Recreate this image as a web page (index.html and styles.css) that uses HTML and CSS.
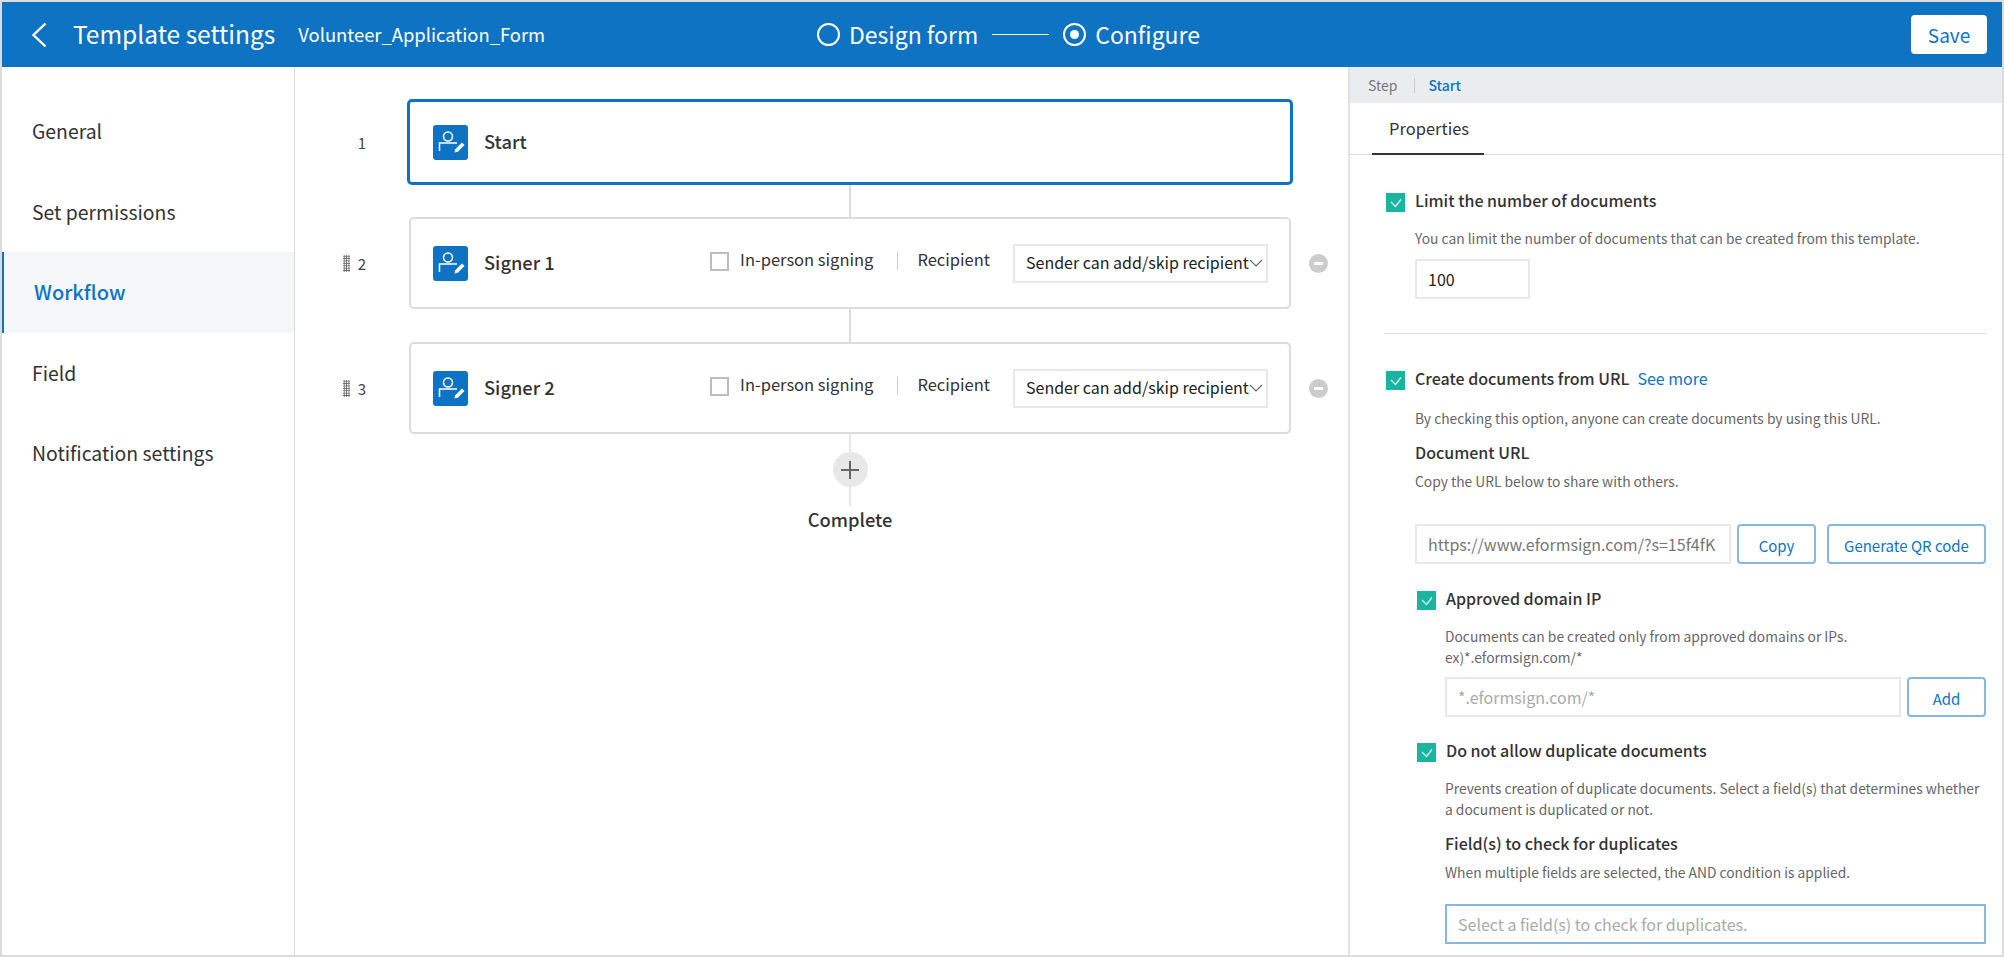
FILE: index.html
```html
<!DOCTYPE html>
<html>
  <head>
    <meta charset="utf-8" />
    <title>Template settings</title>
    <link rel="stylesheet" href="styles.css">
  </head>
  <body>
    <div id="frame">
      <header class="topbar">
        <div class="topbar-left">
          <svg class="back" width="16" height="26" viewBox="0 0 16 26"><path d="M14.5 1.5 2.5 13l12 11.5" fill="none" stroke="#fff" stroke-width="2.4"/></svg>
          <span class="page-title">Template settings</span>
          <span class="form-name">Volunteer_Application_Form</span>
        </div>
        <div class="steps">
          <span class="radio"></span>
          <span class="step-label">Design form</span>
          <span class="step-line"></span>
          <span class="radio radio-on"></span>
          <span class="step-label">Configure</span>
        </div>
        <button class="save" type="button">Save</button>
      </header>

      <div class="content">
        <nav class="sidebar">
          <div class="nav-item">General</div>
          <div class="nav-item">Set permissions</div>
          <div class="nav-item nav-active">Workflow</div>
          <div class="nav-item">Field</div>
          <div class="nav-item">Notification settings</div>
        </nav>

        <main class="flow">
          <div class="flow-row">
            <div class="flow-num"><span>1</span></div>
            <div class="card card-start">
              <svg class="step-icon" width="35" height="35" viewBox="0 0 35 35"><rect width="35" height="35" rx="3" fill="#0f73c4"/><circle cx="15" cy="11.5" r="4.500" fill="none" stroke="#fff" stroke-width="1.500"/><path d="M6.500 26v-8H24" fill="none" stroke="#fff" stroke-width="1.500"/><path d="M21.500 27.500l.8-3.300 6.700-6.700 2.500 2.500-6.700 6.700z" fill="#fff"/></svg>
              <span class="card-title">Start</span>
            </div>
          </div>
          <div class="connector"></div>

          <div class="flow-row">
            <div class="flow-num"><span class="handle"></span><span>2</span></div>
            <div class="card">
              <svg class="step-icon" width="35" height="35" viewBox="0 0 35 35"><rect width="35" height="35" rx="3" fill="#0f73c4"/><circle cx="15" cy="11.5" r="4.500" fill="none" stroke="#fff" stroke-width="1.500"/><path d="M6.500 26v-8H24" fill="none" stroke="#fff" stroke-width="1.500"/><path d="M21.500 27.500l.8-3.300 6.700-6.700 2.500 2.500-6.700 6.700z" fill="#fff"/></svg>
              <span class="card-title">Signer 1</span>
              <div class="card-options">
                <span class="box"></span>
                <span class="opt-label">In-person signing</span>
                <span class="opt-sep"></span>
                <span class="opt-label">Recipient</span>
                <div class="select">
                  <span>Sender can add/skip recipient</span>
                  <svg width="14" height="8" viewBox="0 0 14 8"><path d="M1 1l6 6 6-6" fill="none" stroke="#666" stroke-width="1.100"/></svg>
                </div>
              </div>
            </div>
            <span class="minus"></span>
          </div>
          <div class="connector connector-2"></div>

          <div class="flow-row">
            <div class="flow-num"><span class="handle"></span><span>3</span></div>
            <div class="card">
              <svg class="step-icon" width="35" height="35" viewBox="0 0 35 35"><rect width="35" height="35" rx="3" fill="#0f73c4"/><circle cx="15" cy="11.5" r="4.500" fill="none" stroke="#fff" stroke-width="1.500"/><path d="M6.500 26v-8H24" fill="none" stroke="#fff" stroke-width="1.500"/><path d="M21.500 27.500l.8-3.300 6.700-6.700 2.500 2.500-6.700 6.700z" fill="#fff"/></svg>
              <span class="card-title">Signer 2</span>
              <div class="card-options">
                <span class="box"></span>
                <span class="opt-label">In-person signing</span>
                <span class="opt-sep"></span>
                <span class="opt-label">Recipient</span>
                <div class="select">
                  <span>Sender can add/skip recipient</span>
                  <svg width="14" height="8" viewBox="0 0 14 8"><path d="M1 1l6 6 6-6" fill="none" stroke="#666" stroke-width="1.100"/></svg>
                </div>
              </div>
            </div>
            <span class="minus"></span>
          </div>

          <div class="end-block">
            <div class="end-line">
              <span class="plus">
                <svg width="18" height="18" viewBox="0 0 18 18"><path d="M9 0v18M0 9h18" stroke="#666" stroke-width="2"/></svg>
              </span>
            </div>
            <div class="end-label">Complete</div>
          </div>
        </main>

        <aside class="panel">
          <div class="crumb">
            <span class="crumb-step">Step</span>
            <span class="crumb-sep"></span>
            <span class="crumb-now">Start</span>
          </div>
          <div class="tabs"><span class="tab">Properties</span></div>

          <div class="props">
            <div class="check-row">
              <span class="check"><svg width="12" height="10" viewBox="0 0 12 10"><path d="M1 4l4.500 4.500L11 1.500" fill="none" stroke="#d8f3ee" stroke-width="1.300"/></svg></span>
              <span class="check-label">Limit the number of documents</span>
            </div>
            <div class="indent">
              <p class="hint hint-1">You can limit the number of documents that can be created from this template.</p>
              <div class="input input-num">100</div>
            </div>

            <hr class="rule">

            <div class="check-row">
              <span class="check"><svg width="12" height="10" viewBox="0 0 12 10"><path d="M1 4l4.500 4.500L11 1.500" fill="none" stroke="#d8f3ee" stroke-width="1.300"/></svg></span>
              <span class="check-label">Create documents from URL</span>
              <a class="see-more">See more</a>
            </div>
            <div class="indent">
              <p class="hint hint-2">By checking this option, anyone can create documents by using this URL.</p>
              <h4 class="sub-head head-url">Document URL</h4>
              <p class="hint hint-3">Copy the URL below to share with others.</p>
              <div class="input-row url-row">
                <div class="input input-url">https://www.eformsign.com/?s=15f4fK</div>
                <button class="btn btn-copy" type="button">Copy</button>
                <button class="btn btn-qr" type="button">Generate QR code</button>
              </div>
            </div>

            <div class="nested">
              <div class="check-row row-domain">
                <span class="check"><svg width="12" height="10" viewBox="0 0 12 10"><path d="M1 4l4.500 4.500L11 1.500" fill="none" stroke="#d8f3ee" stroke-width="1.300"/></svg></span>
                <span class="check-label">Approved domain IP</span>
              </div>
              <div class="nested-body">
                <p class="hint hint-4">Documents can be created only from approved domains or IPs.<br>ex)*.eformsign.com/*</p>
                <div class="input-row domain-row">
                  <div class="input input-domain">*.eformsign.com/*</div>
                  <button class="btn btn-add" type="button">Add</button>
                </div>
              </div>

              <div class="check-row row-dup">
                <span class="check"><svg width="12" height="10" viewBox="0 0 12 10"><path d="M1 4l4.500 4.500L11 1.500" fill="none" stroke="#d8f3ee" stroke-width="1.300"/></svg></span>
                <span class="check-label">Do not allow duplicate documents</span>
              </div>
              <div class="nested-body">
                <p class="hint hint-5">Prevents creation of duplicate documents. Select a field(s) that determines whether a document is duplicated or not.</p>
                <h4 class="sub-head head-dup">Field(s) to check for duplicates</h4>
                <p class="hint hint-3">When multiple fields are selected, the AND condition is applied.</p>
                <div class="input input-dup">Select a field(s) to check for duplicates.</div>
              </div>
            </div>
          </div>
        </aside>
      </div>
    </div>
  </body>
</html>
```

FILE: styles.css
```css
/* Template settings page */
* {
  box-sizing: border-box;
}
html, body {
  margin: 0;
  padding: 0;
  overflow: hidden;
}
body {
  font-family: "Noto Sans CJK KR", "Noto Sans", sans-serif;
  color: #333;
  background-color: #fff;
}
#frame {
  width: 2004px;
  height: 957px;
  border: 2px solid #dcdcdc;
  display: flex;
  flex-direction: column;
  overflow: hidden;
}

/* top bar */
.topbar {
  height: 65px;
  flex: none;
  background-color: #0f73c4;
  color: #fff;
  display: flex;
  align-items: center;
  position: relative;
}
.topbar-left {
  display: flex;
  align-items: center;
  padding-left: 29px;
}
.page-title {
  font-size: 24.500px;
  margin-left: 26px;
  margin-top: -2px;
}
.form-name {
  font-size: 18.400px;
  margin-left: 23px;
  margin-top: -2px;
}
.steps {
  position: absolute;
  left: 815px;
  top: 0;
  height: 65px;
  display: flex;
  align-items: center;
  font-size: 23px;
}
.radio {
  width: 23px;
  height: 23px;
  border: 2px solid #fff;
  border-radius: 50%;
  display: block;
  position: relative;
}
.radio-on::after {
  content: "";
  position: absolute;
  left: 5px;
  top: 5px;
  width: 9px;
  height: 9px;
  border-radius: 50%;
  background-color: #fff;
}
.step-label {
  margin-left: 9px;
  margin-top: -2px;
}
.step-line {
  width: 57px;
  height: 1px;
  background-color: #fff;
  margin: 0 14px 0 14px;
}
.save {
  margin-left: auto;
  margin-right: 15px;
  width: 76px;
  height: 39px;
  border: none;
  border-radius: 4px;
  background-color: #fff;
  color: #0f73c4;
  font-family: inherit;
  font-size: 19px;
  padding: 0;
}

.content {
  flex: 1;
  display: flex;
  min-height: 0;
}

/* left nav */
.sidebar {
  width: 293px;
  flex: none;
  border-right: 1px solid #dcdcdc;
  padding-top: 24px;
}
.nav-item {
  height: 80.500px;
  display: flex;
  align-items: center;
  padding-left: 30px;
  padding-bottom: 1px;
  font-size: 19.400px;
}
.nav-active {
  background-color: #f5f6f8;
  border-left: 2px solid #0f73c4;
  color: #0f73c4;
  font-weight: 500;
  font-size: 20px;
}

/* workflow */
.flow {
  flex: 1;
  padding-top: 32px;
  min-width: 0;
}
.flow-row {
  display: flex;
  align-items: center;
}
.flow-num {
  width: 112px;
  flex: none;
  display: flex;
  justify-content: flex-end;
  align-items: center;
  gap: 8px;
  padding-right: 41px;
  font-size: 15px;
  color: #444;
}
.handle {
  width: 7px;
  height: 17px;
  background-image: radial-gradient(#666 0.9px, transparent 1.1px);
  background-size: 2.400px 2.400px;
}
.card {
  width: 882px;
  height: 92px;
  margin-left: 2px;
  border: 2px solid #dcdcdc;
  border-radius: 5px;
  display: flex;
  align-items: center;
  padding-left: 22px;
  background-color: #fff;
}
.card-start {
  width: 886px;
  height: 86px;
  margin-left: 0;
  border: 3px solid #0f73c4;
  padding-left: 23px;
}
.card-title {
  font-size: 18.300px;
  margin-left: 16px;
  margin-top: -2px;
  font-weight: 500;
}
.step-icon {
  flex: none;
}
.card-options {
  margin-left: auto;
  padding-right: 21px;
  display: flex;
  align-items: center;
}
.box {
  width: 19px;
  height: 19px;
  border: 2px solid #bdbdbd;
  background-color: #fff;
  margin-top: -4px;
}
.opt-label {
  font-size: 16.500px;
  margin-top: -9px;
  margin-left: 11px;
}
.opt-sep {
  width: 1px;
  height: 18px;
  background-color: #ccc;
  margin: -4px 8px 0 24px;
}
.select {
  width: 255px;
  height: 39px;
  margin-left: 23px;
  border: 2px solid #e8e8e8;
  display: flex;
  align-items: center;
  justify-content: space-between;
  padding: 0 4px 0 11px;
  font-size: 16px;
  color: #222;
  white-space: nowrap;
}
.select span {
  margin-top: -2px;
}
.select svg {
  flex: none;
}
.minus {
  width: 19px;
  height: 19px;
  border-radius: 50%;
  background-color: #ccc;
  margin-left: 18px;
  position: relative;
  flex: none;
}
.minus::after {
  content: "";
  position: absolute;
  left: 5px;
  top: 8px;
  width: 9px;
  height: 3px;
  background-color: #fff;
}
.connector {
  width: 2px;
  height: 32px;
  background-color: #dcdcdc;
  margin-left: 554px;
}
.connector-2 {
  height: 33px;
}
.end-block {
  width: 200px;
  margin-left: 455px;
  display: flex;
  flex-direction: column;
  align-items: center;
}
.end-line {
  width: 2px;
  height: 72px;
  background-color: #e8e8e8;
  display: flex;
  justify-content: center;
  padding-top: 18px;
}
.plus {
  width: 35px;
  height: 35px;
  flex: none;
  border-radius: 50%;
  background-color: #e8e8e8;
  display: flex;
  align-items: center;
  justify-content: center;
}
.end-label {
  font-size: 18.300px;
  font-weight: 500;
  line-height: 26px;
}

/* right panel */
.panel {
  width: 654px;
  flex: none;
  border-left: 2px solid #e2e2e2;
  overflow: hidden;
}
.crumb {
  height: 36px;
  background-color: #eaedf0;
  display: flex;
  align-items: center;
  padding-left: 18px;
  font-size: 14px;
}
.crumb-step {
  color: #777;
}
.crumb-sep {
  width: 1px;
  height: 15px;
  background-color: #ccc;
  margin: 0 13px 0 17px;
}
.crumb-now {
  color: #0f73c4;
  font-weight: 500;
}
.tabs {
  height: 52px;
  border-bottom: 1px solid #dcdcdc;
  padding-left: 22px;
}
.tab {
  display: inline-block;
  height: 52px;
  padding: 0 17px;
  line-height: 50px;
  font-size: 16.500px;
  border-bottom: 2px solid #333;
  width: 112px;
}
.props {
  padding: 34px 16px 0 36px;
}
.check-row {
  display: flex;
  align-items: center;
  height: 24px;
}
.check {
  width: 19px;
  height: 19px;
  flex: none;
  background-color: #19b5a0;
  display: flex;
  align-items: center;
  justify-content: center;
  margin-top: 3px;
}
.check-label {
  font-size: 16px;
  margin-left: 10px;
  margin-top: -3px;
  font-weight: 500;
}
.see-more {
  color: #0f73c4;
  font-size: 16px;
  margin-left: 8px;
  margin-top: -3px;
}
.indent {
  padding-left: 29px;
}
.hint {
  font-size: 13.800px;
  line-height: 20px;
  color: #666;
  margin: 0;
}
.hint-1 {
  margin-top: 15px;
}
.hint-2 {
  margin-top: 17px;
}
.hint-3 {
  margin-top: 7px;
}
.hint-4 {
  margin-top: 15px;
  line-height: 21px;
}
.hint-5 {
  margin-top: 15px;
  line-height: 20.500px;
}
.sub-head {
  margin: 0;
  font-size: 16px;
  font-weight: 500;
  line-height: 24px;
}
.head-url {
  margin-top: 12px;
}
.head-dup {
  margin-top: 12px;
}
.input {
  height: 40px;
  border: 2px solid #e8e8e8;
  padding: 0 11px 1px;
  display: flex;
  align-items: center;
  font-size: 16px;
  background-color: #fff;
  white-space: nowrap;
  overflow: hidden;
}
.input-num {
  width: 115px;
  margin-top: 11px;
  color: #222;
}
.rule {
  border: none;
  border-top: 1px solid #dcdcdc;
  margin: 34px 0 33px -2px;
}
.input-row {
  display: flex;
}
.url-row {
  margin-top: 33px;
}
.input-url {
  width: 316px;
  color: #777;
}
.btn {
  height: 40px;
  border: 2px solid #85b7e6;
  border-radius: 4px;
  background-color: #fff;
  color: #0f73c4;
  font-family: inherit;
  font-size: 15px;
  padding: 2px 0 0;
}
.btn-copy {
  width: 79px;
  margin-left: 6px;
}
.btn-qr {
  width: 159px;
  margin-left: 11px;
}
.nested {
  padding-left: 31px;
}
.nested-body {
  padding-left: 28px;
}
.row-domain {
  margin-top: 23px;
}
.domain-row {
  margin-top: 9px;
}
.input-domain {
  width: 456px;
  color: #aaa;
}
.btn-add {
  width: 79px;
  margin-left: 6px;
}
.row-dup {
  margin-top: 22px;
}
.input-dup {
  margin-top: 22px;
  border: 2px solid #85b7e6;
  color: #aaa;
}
```
